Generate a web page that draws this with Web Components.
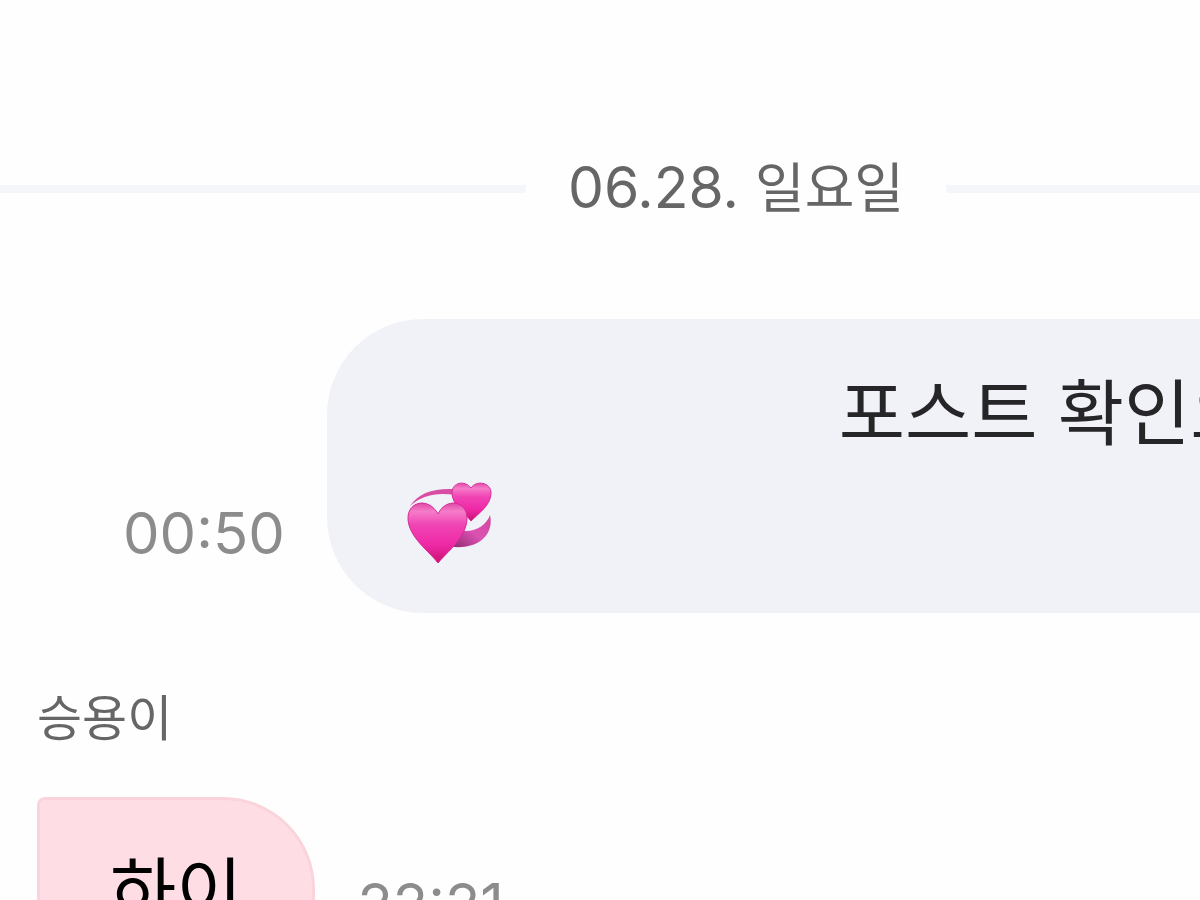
<!DOCTYPE html>
<html lang="ko">
<head>
<meta charset="utf-8">
<meta name="viewport" content="width=device-width, initial-scale=1">
<title>채팅</title>
<style>
    body{
        margin:0;
        background:#fefefe;
        font-family:Inter,"Noto Sans CJK KR",sans-serif;
        overflow:hidden;
    }
    .weekday{
        font-size:54px;
    }
</style>
</head>
<body>
<chat-room>
    <date-divider>06.28. <span class="weekday">일요일</span></date-divider>
    <chat-message side="mine" time="00:50">
        <p class="post">포스트 확인요</p>
        <p><revolving-hearts></revolving-hearts></p>
    </chat-message>
    <chat-message side="other" name="승용이" time="22:21">
        <p>하이</p>
    </chat-message>
</chat-room>
<script>
const roomStyle=`<style>
    :host{
        display:flex;
        flex-direction:column;
        height:100vh;
        overflow:hidden;
        padding-top:148px;
        box-sizing:border-box;
    }
</style>`
class ChatRoom extends HTMLElement{
    constructor(){
        super()
        this.attachShadow({mode:"open"})
        this.shadowRoot.innerHTML=`${roomStyle}<slot></slot>`
    }
}
window.customElements.define('chat-room',ChatRoom)

const dividerStyle=`<style>
    :host{
        display:flex;
        align-items:center;
        flex:none;
        gap:42px;
        margin-right:-272px;
        font-size:57px;
        line-height:80px;
        color:#666;
        white-space:nowrap;
    }
    .line{
        flex:1;
        height:8px;
        background:#f5f6fa;
    }
</style>`
class DateDivider extends HTMLElement{
    constructor(){
        super()
        this.attachShadow({mode:"open"})
        this.shadowRoot.innerHTML=`
            ${dividerStyle}
            <span class="line"></span>
            <span><slot></slot></span>
            <span class="line"></span>
        `
    }
}
window.customElements.define('date-divider',DateDivider)

const messageStyle=`<style>
    :host{
        display:block;
        flex:none;
    }
    .name{
        padding-left:37px;
        font-size:49px;
        line-height:72px;
        color:#666;
    }
    .row{
        display:flex;
        align-items:flex-end;
        gap:42px;
    }
    .bubble{
        box-sizing:border-box;
        font-size:72px;
        line-height:106px;
        white-space:nowrap;
    }
    time{
        flex:none;
        font-size:58px;
        line-height:80px;
        color:#8c8c8c;
    }
    ::slotted(p){
        margin:0;
    }
    ::slotted(.post){
        padding-left:432px;
    }
    :host([side="mine"]){
        margin-top:90px;
    }
    :host([side="mine"]) .row{
        padding-left:123px;
    }
    :host([side="mine"]) .bubble{
        flex:1;
        min-width:0;
        margin-right:-96px;
        padding:41px 80px;
        border-radius:96px;
        background:#f1f2f7;
        color:#262628;
    }
    :host([side="mine"]) time{
        padding-bottom:40px;
    }
    :host([side="other"]){
        margin-top:70px;
    }
    :host([side="other"]) .row{
        margin-top:42px;
        padding-left:37px;
    }
    :host([side="other"]) .bubble{
        padding:38px 70px 41px;
        border:3px solid #fbd3db;
        border-radius:8px 92px 92px 92px;
        background:#fedee4;
        color:#000;
    }
    :host([side="other"]) time{
        padding-bottom:44px;
    }
</style>`
class ChatMessage extends HTMLElement{
    constructor(){
        super()
        this.attachShadow({mode:"open"})
    }
    connectedCallback(){
        const name=this.getAttribute('name')
        const mine=this.getAttribute('side')==='mine'
        const time=`<time>${this.getAttribute('time')}</time>`
        this.shadowRoot.innerHTML=`
            ${messageStyle}
            ${name ? `<div class="name">${name}</div>` : ''}
            <div class="row">
                ${mine ? time : ''}
                <div class="bubble"><slot></slot></div>
                ${mine ? '' : time}
            </div>
        `
    }
}
window.customElements.define('chat-message',ChatMessage)

const heartsTemplate=document.createElement('template')
heartsTemplate.innerHTML=`
<style>
    :host{
        display:inline-block;
        vertical-align:middle;
    }
    svg{
        display:block;
        width:88px;
        height:88px;
    }
</style>
<svg viewBox="0 0 88 88" role="img" aria-label="💞">
    <defs>
        <linearGradient id="big" x1="0" y1="0" x2="0" y2="1">
            <stop offset="0" stop-color="#e04aa8"/>
            <stop offset=".14" stop-color="#f57cc9"/>
            <stop offset=".36" stop-color="#f045b4"/>
            <stop offset=".7" stop-color="#ef28a6"/>
            <stop offset="1" stop-color="#c9106f"/>
        </linearGradient>
        <linearGradient id="tail" x1="0" y1="1" x2="1" y2="0">
            <stop offset="0" stop-color="#8f2a72"/>
            <stop offset=".5" stop-color="#dc52b2"/>
            <stop offset="1" stop-color="#d0489f"/>
        </linearGradient>
    </defs>
    <path d="M3 25C11 12 27 7 47 8L48 14C29 11 14 15 3 25Z" fill="#d84ca4"/>
    <path d="M83 34C87 51 75 68 46 66L56 50C70 51 80 43 83 34Z" fill="url(#tail)"/>
    <path d="M64 40C58 32 45 24 45 12C45 1 58-1 64 7C69-1 84 1 84 12C84 24 72 32 64 40Z" fill="url(#big)" stroke="#d52b96"/>
    <path d="M31 82C23 71 1 56 1 37C1 20 22 16 31 33C39 16 60 20 60 37C60 56 40 71 31 82Z" fill="url(#big)" stroke="#d52b96"/>
</svg>`
class RevolvingHearts extends HTMLElement{
    constructor(){
        super()
        this.attachShadow({mode:"open"})
        this.shadowRoot.appendChild(heartsTemplate.content.cloneNode(true))
    }
}
window.customElements.define('revolving-hearts',RevolvingHearts)
</script>
</body>
</html>
